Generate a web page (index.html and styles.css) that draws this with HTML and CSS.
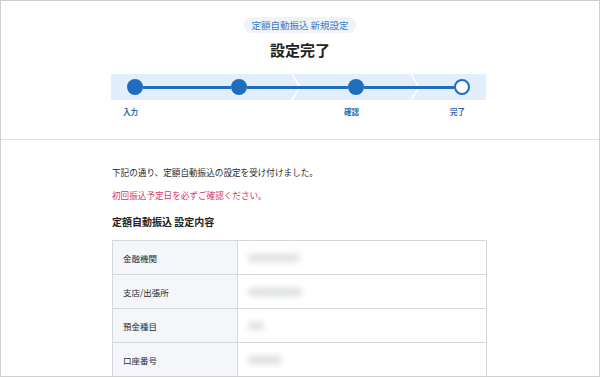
FILE: index.html
```html
<!DOCTYPE html>
<html lang="ja">
<head>
    <meta charset="UTF-8">
    <meta name="viewport" content="width=device-width, initial-scale=1.0">
    <title>設定完了</title>
    <link rel="stylesheet" href="styles.css">
</head>
<body>
<div class="frame">

    <!-- Header -->
    <header class="head">
        <span class="badge">定額自動振込 新規設定</span>
        <h1>設定完了</h1>

        <div class="stepper">
            <svg class="chevrons" width="375" height="26" viewBox="0 0 375 26">
                <polyline points="181,0 189,13 181,26" fill="none" stroke="#fff" stroke-width="1.5"/>
                <polyline points="300,0 308,13 300,26" fill="none" stroke="#fff" stroke-width="1.5"/>
            </svg>
            <div class="track">
                <span class="dot"></span>
                <span class="line l1"></span>
                <span class="dot"></span>
                <span class="line l2"></span>
                <span class="dot"></span>
                <span class="line l3"></span>
                <span class="dot open"></span>
            </div>
        </div>
        <div class="labels">
            <span class="lab">入力</span>
            <span class="gap l1"></span>
            <span class="lab"></span>
            <span class="gap l2"></span>
            <span class="lab">確認</span>
            <span class="gap l3"></span>
            <span class="lab">完了</span>
        </div>
    </header>

    <!-- Content -->
    <section class="content">
        <p class="msg">下記の通り、定額自動振込の設定を受け付けました。</p>
        <p class="msg alert">初回振込予定日を必ずご確認ください。</p>
        <h2>定額自動振込 設定内容</h2>

        <table class="detail">
            <tr>
                <th>金融機関</th>
                <td><span class="blur" style="width:52px"></span></td>
            </tr>
            <tr>
                <th>支店/出張所</th>
                <td><span class="blur" style="width:54px"></span></td>
            </tr>
            <tr>
                <th>預金種目</th>
                <td><span class="blur" style="width:16px"></span></td>
            </tr>
            <tr>
                <th>口座番号</th>
                <td><span class="blur" style="width:34px"></span></td>
            </tr>
        </table>
    </section>

</div>
</body>
</html>
```

FILE: styles.css
```css
body {
    margin: 0;
    font-family: "Noto Sans CJK JP", "Noto Sans", sans-serif;
    color: #333;
    background: #fff;
}
.frame {
    box-sizing: border-box;
    width: 600px;
    height: 377px;
    border: 1px solid #cfcfcf;
    overflow: hidden;
}
.head {
    box-sizing: border-box;
    height: 139px;
    border-bottom: 1px solid #e2e2e2;
    display: flex;
    flex-direction: column;
    align-items: center;
    padding-top: 16px;
}
.badge {
    font-size: 9.5px;
    line-height: 16px;
    color: #3d7cc4;
    background: #eef4fa;
    border-radius: 8px;
    padding: 0 7px;
}
.head h1 {
    margin: 6px 0 0;
    font-size: 15px;
    line-height: 22px;
    font-weight: bold;
    color: #222;
}
.stepper {
    position: relative;
    margin: 13px 4px 0 0;
    width: 375px;
    height: 26px;
    background: #e2eefa;
}
.chevrons {
    position: absolute;
    left: 0;
    top: 0;
}
.track {
    position: relative;
    display: flex;
    align-items: center;
    height: 26px;
    padding-left: 16px;
}
.dot {
    width: 16px;
    height: 16px;
    border-radius: 50%;
    background: #1f6dbd;
    box-sizing: border-box;
    flex-shrink: 0;
}
.dot.open {
    background: #fff;
    border: 2px solid #1f6dbd;
}
.line {
    height: 3px;
    background: #1f6dbd;
}
.l1 { width: 88px; }
.l2 { width: 101px; }
.l3 { width: 90px; }
.labels {
    display: flex;
    width: 375px;
    padding-left: 4px;
    box-sizing: border-box;
    margin: 6px 4px 0 0;
}
.lab {
    width: 32px;
    text-align: center;
    font-size: 7.5px;
    font-weight: bold;
    color: #2a69ad;
    line-height: 12px;
}
.labels .gap {
    display: block;
    flex-shrink: 0;
}
.labels .l1 { width: 72px; }
.labels .l2 { width: 85px; }
.labels .l3 { width: 74px; }
.content {
    padding: 25px 0 0 111px;
}
.msg {
    margin: 0 0 9px;
    font-size: 8.6px;
    line-height: 14px;
    color: #2b2b2b;
}
.msg.alert {
    color: #d9346c;
}
.content h2 {
    margin: 12px 0 0;
    font-size: 10px;
    line-height: 16px;
    font-weight: bold;
    color: #222;
}
.detail {
    margin-top: 10px;
    width: 375px;
    border-collapse: collapse;
}
.detail th,
.detail td {
    border: 1px solid #d3d8df;
    height: 33px;
    padding: 0;
}
.detail th {
    width: 114px;
    padding-left: 10px;
    background: #f4f6f9;
    text-align: left;
    font-size: 8.5px;
    font-weight: normal;
    color: #2b2b2b;
}
.detail td {
    padding-left: 10px;
}
.blur {
    display: block;
    height: 8px;
    border-radius: 4px;
    background: #dcdee1;
    filter: blur(3px);
}
```
